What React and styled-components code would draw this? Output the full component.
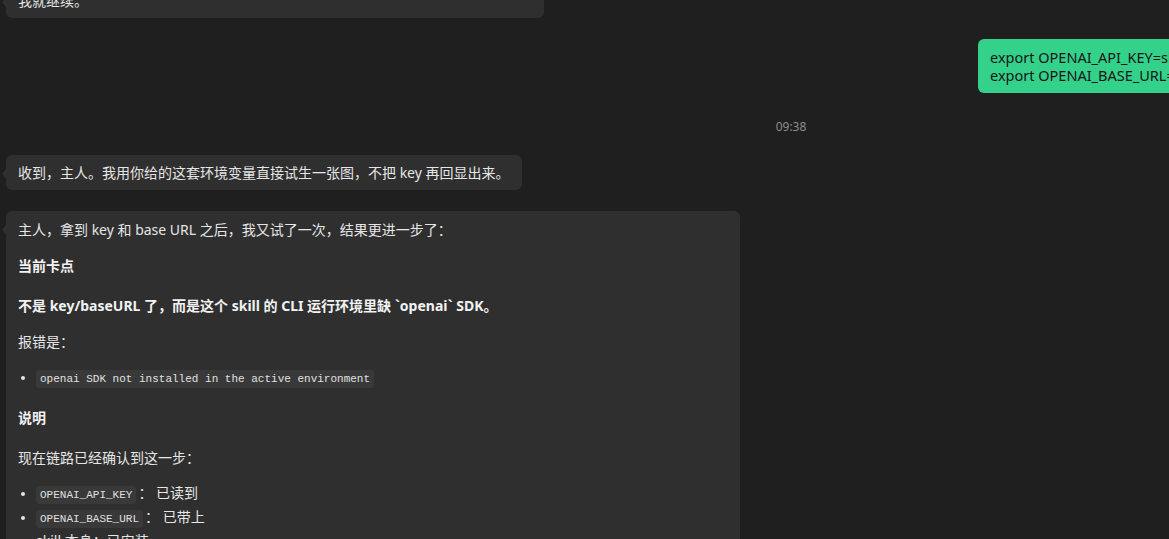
import styled, { createGlobalStyle } from 'styled-components';

const GlobalStyle = createGlobalStyle`
  html, body {
    margin: 0;
    padding: 0;
    background: #1f1f1f;
    overflow: hidden;
  }
  body {
    font-family: "Noto Sans", "Noto Sans CJK SC", sans-serif;
    color: #e6e6e6;
  }
`;

const Chat = styled.div`
  width: 1582px;
  height: 560px;
  box-sizing: border-box;
  padding: 0 6px;
  margin-top: -17px;
  display: flex;
  flex-direction: column;
  gap: 21px;
`;

const Row = styled.div`
  display: flex;
  justify-content: ${({ $mine }) => ($mine ? 'flex-end' : 'flex-start')};
`;

const TimeStamp = styled.div`
  text-align: center;
  font-size: 12px;
  line-height: 16px;
  color: #8c8c8c;
  margin: 5px 0 -1px;
`;

const Bubble = styled.div`
  position: relative;
  box-sizing: border-box;
  width: ${({ $width }) => $width || 'auto'};
  max-width: 734px;
  background: #2f2f2f;
  border-radius: 6px;
  padding: ${({ $tall }) => ($tall ? '8px 12px 12px' : '7px 12px 6px')};
  font-size: 14px;
  line-height: 22px;
  display: flex;
  flex-direction: column;

  &::before {
    content: '';
    position: absolute;
    left: -4px;
    top: 14px;
    border-style: solid;
    border-width: 5px 4px 5px 0;
    border-color: transparent #2f2f2f transparent transparent;
  }
`;

const MyBubble = styled.div`
  box-sizing: border-box;
  width: ${({ $width }) => $width || 'auto'};
  background: #34d18b;
  color: #161616;
  border-radius: 6px;
  padding: 9px 12px;
  font-size: 14.5px;
  line-height: 18px;
  white-space: nowrap;
`;

const Para = styled.p`
  margin: ${({ $first }) => ($first ? '0' : '14px 0 0')};
  font-weight: ${({ $strong }) => ($strong ? 700 : 400)};
  color: ${({ $strong }) => ($strong ? '#f2f2f2' : 'inherit')};
`;

const Heading = styled.h4`
  margin: 14px 0 4px;
  font-size: 14px;
  line-height: 22px;
  font-weight: 700;
  color: #f2f2f2;
`;

const List = styled.ul`
  margin: 12px 0 4px;
  padding-left: 18px;
`;

const Item = styled.li`
  line-height: 24px;
  &::marker {
    font-size: 12px;
  }
`;

const Code = styled.code`
  font-family: "Liberation Mono", "DejaVu Sans Mono", monospace;
  font-size: 11px;
  line-height: 1;
  background: #393939;
  border-radius: 3px;
  padding: 3px 4px;
  margin-right: 2px;
  color: #e0e0e0;
`;

export default function App() {
  return (
    <>
      <GlobalStyle />
      <Chat>
        <Row>
          <Bubble $width="538px">我就继续。</Bubble>
        </Row>

        <Row $mine>
          <MyBubble $width="598px">
            export OPENAI_API_KEY=sk-••••••••••••••••••••
            <br />
            export OPENAI_BASE_URL=https://api.openai.com/v1
          </MyBubble>
        </Row>

        <TimeStamp>09:38</TimeStamp>

        <Row>
          <Bubble>收到，主人。我用你给的这套环境变量直接试生一张图，不把 key 再回显出来。</Bubble>
        </Row>

        <Row>
          <Bubble $width="734px" $tall>
            <Para $first>主人，拿到 key 和 base URL 之后，我又试了一次，结果更进一步了：</Para>
            <Heading>当前卡点</Heading>
            <Para $strong>不是 key/baseURL 了，而是这个 skill 的 CLI 运行环境里缺 `openai` SDK。</Para>
            <Para>报错是：</Para>
            <List>
              <Item>
                <Code>openai SDK not installed in the active environment</Code>
              </Item>
            </List>
            <Heading>说明</Heading>
            <Para>现在链路已经确认到这一步：</Para>
            <List>
              <Item>
                <Code>OPENAI_API_KEY</Code>： 已读到
              </Item>
              <Item>
                <Code>OPENAI_BASE_URL</Code>： 已带上
              </Item>
              <Item>skill 本身：已安装</Item>
            </List>
          </Bubble>
        </Row>
      </Chat>
    </>
  );
}
